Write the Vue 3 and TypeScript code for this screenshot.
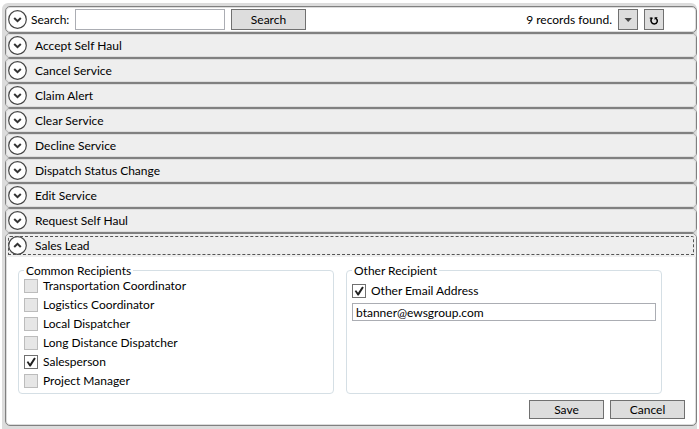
<script setup lang="ts">
import { ref } from 'vue'

interface Recipient {
  id: string
  label: string
  checked: boolean
}

const query = ref('')
const filtersOpen = ref(false)
const openSection = ref('Sales Lead')
const otherEnabled = ref(true)
const otherEmail = ref('btanner@ewsgroup.com')

const sections: string[] = [
  'Accept Self Haul',
  'Cancel Service',
  'Claim Alert',
  'Clear Service',
  'Decline Service',
  'Dispatch Status Change',
  'Edit Service',
  'Request Self Haul',
  'Sales Lead',
]

const recipients = ref<Recipient[]>([
  { id: 'transportation', label: 'Transportation Coordinator', checked: false },
  { id: 'logistics', label: 'Logistics Coordinator', checked: false },
  { id: 'local', label: 'Local Dispatcher', checked: false },
  { id: 'long', label: 'Long Distance Dispatcher', checked: false },
  { id: 'sales', label: 'Salesperson', checked: true },
  { id: 'project', label: 'Project Manager', checked: false },
])

function toggle(name: string): void {
  openSection.value = openSection.value === name ? '' : name
}
</script>

<template>
  <main class="panel">
    <form class="card search-bar" @submit.prevent>
      <button
        type="button"
        class="expander"
        aria-label="Search options"
        :aria-expanded="filtersOpen"
        @click="filtersOpen = !filtersOpen"
      >
        <svg class="ring" viewBox="0 0 19 19" aria-hidden="true">
          <circle cx="9.5" cy="9.5" r="8.8" />
          <path d="M6.2 8 L9.5 11.2 L12.8 8" />
        </svg>
      </button>
      <label class="search-label" for="search">Search:</label>
      <input id="search" v-model="query" class="text-box search-box" type="text" />
      <button type="submit" class="btn btn-tall">Search</button>
      <span class="count">{{ sections.length }} records found.</span>
      <button type="button" class="btn btn-icon" aria-label="More actions">
        <svg class="glyph" viewBox="0 0 10 10" aria-hidden="true">
          <path class="solid" d="M1.5 3 H8.9 L5.2 7 Z" />
        </svg>
      </button>
      <button type="button" class="btn btn-icon" aria-label="Refresh">
        <svg class="glyph" viewBox="0 0 10 10" aria-hidden="true">
          <path class="arc" d="M2.9 3 C1 5.4 2.2 8.9 5.2 8.9 C8.6 8.9 9.2 5.4 7 3.3" />
          <path class="head" d="M0.8 2.4 H3.6 V3.7 H0.8 Z M5.6 2.2 H8.8 L5.6 5 Z" />
        </svg>
      </button>
    </form>

    <section v-for="name in sections" :key="name" class="card">
      <button
        type="button"
        class="section-head"
        :class="{ focused: openSection === name }"
        :aria-expanded="openSection === name"
        @click="toggle(name)"
      >
        <svg class="ring" viewBox="0 0 19 19" aria-hidden="true">
          <circle cx="9.5" cy="9.5" r="8.8" />
          <path v-if="openSection === name" d="M6.2 11 L9.5 7.8 L12.8 11" />
          <path v-else d="M6.2 8 L9.5 11.2 L12.8 8" />
        </svg>
        <span>{{ name }}</span>
      </button>

      <form v-if="openSection === name" class="body" @submit.prevent>
        <div class="groups">
          <div class="group" role="group" aria-labelledby="common-title">
            <span id="common-title" class="group-title">Common Recipients</span>
            <label v-for="r in recipients" :key="r.id" class="check">
              <input v-model="r.checked" type="checkbox" :class="{ muted: !r.checked }" />
              <span>{{ r.label }}</span>
            </label>
          </div>
          <div class="group group-other" role="group" aria-labelledby="other-title">
            <span id="other-title" class="group-title">Other Recipient</span>
            <label class="check">
              <input v-model="otherEnabled" type="checkbox" />
              <span>Other Email Address</span>
            </label>
            <input v-model="otherEmail" class="text-box email" type="text" aria-label="Other email address" />
          </div>
        </div>
        <div class="actions">
          <button type="submit" class="btn">Save</button>
          <button type="button" class="btn" @click="openSection = ''">Cancel</button>
        </div>
      </form>
    </section>
  </main>
</template>

<style>
body {
  margin: 0;
  background: #fff;
}
</style>

<style scoped>
.panel {
  box-sizing: border-box;
  margin: 3px 2px 0;
  padding: 3px 0 3px 3px;
  min-height: calc(100vh - 3px);
  background: #dcdcdc;
  border-radius: 6px 6px 0 0;
  font-family: 'Segoe UI', Lato, 'Open Sans', sans-serif;
  font-size: 12px;
  font-variant-ligatures: none;
  line-height: 16px;
  color: #000;
}

button,
input {
  box-sizing: border-box;
  margin: 0;
  font: inherit;
  color: inherit;
}

.card {
  border: 1px solid #808080;
  border-radius: 5px;
  background: #fff;
  box-shadow: inset 0 0 0 1px #dcdcdc;
}

.search-bar {
  display: flex;
  align-items: center;
  height: 25px;
  padding: 0 32px 0 2px;
}

.expander {
  display: flex;
  padding: 0;
  border: 0;
  background: none;
}

.ring {
  flex: none;
  width: 19px;
  height: 19px;
  fill: none;
}

.ring circle {
  fill: #fff;
  stroke: #444;
  stroke-width: 1.2;
}

.ring path {
  stroke: #333;
  stroke-width: 2;
}

.search-label {
  width: 44px;
  margin-left: 4px;
  white-space: nowrap;
}

.text-box {
  border: 1px solid #abadb3;
  border-radius: 0;
  background: #fff;
  padding: 0 3px;
}

.search-box {
  width: 150px;
  height: 21px;
  margin-right: 6px;
}

.btn {
  width: 75px;
  height: 19px;
  padding: 0;
  border: 1px solid #707070;
  border-radius: 0;
  background: #ddd;
  line-height: 16px;
}

.btn-tall {
  height: 21px;
}

.count {
  margin-left: auto;
  white-space: nowrap;
}

.btn-icon {
  display: flex;
  align-items: center;
  justify-content: center;
  width: 20px;
  height: 21px;
  margin-left: 6px;
}

.glyph {
  width: 10px;
  height: 10px;
  fill: none;
}

.solid {
  fill: #444;
}

.arc {
  stroke: #000;
  stroke-width: 1.5;
}

.head {
  fill: #000;
}

.section-head {
  display: flex;
  align-items: center;
  gap: 8px;
  width: 100%;
  height: 23px;
  padding: 0 2px;
  border: 0;
  border-radius: 4px;
  background: #eee;
  box-shadow: inset 0 0 0 1px #dcdcdc;
  text-align: left;
}

.section-head.focused {
  outline: 1px dashed #555;
  outline-offset: -3px;
  border-radius: 4px 4px 0 0;
  box-shadow: none;
}

.body {
  padding: 6px 11px 6px 12px;
}

.groups {
  display: grid;
  grid-template-columns: 1fr 1fr;
  gap: 12px;
  padding-right: 23px;
}

.group {
  display: flex;
  flex-direction: column;
  gap: 3px;
  margin-top: 7px;
  padding: 0 5px 4px;
  border: 1px solid #d5dfe5;
  border-radius: 4px;
}

.group-title {
  align-self: flex-start;
  margin: -8px 0 -4px;
  padding: 0 2px;
  background: #fff;
}

.check {
  display: flex;
  align-items: center;
  gap: 5px;
}

.check input {
  flex: none;
  appearance: none;
  width: 14px;
  height: 14px;
  border: 1px solid #707070;
  background: #fff;
}

.check input:checked::before {
  content: '';
  display: block;
  width: 12px;
  height: 12px;
  background: #212121;
  clip-path: polygon(14% 50%, 27% 43%, 42% 64%, 76% 12%, 90% 20%, 48% 88%, 38% 88%);
}

.check input.muted {
  border-color: #bcbcbc;
  background: #e6e6e6;
}

.group-other {
  gap: 4px;
}

.group-other .check {
  margin-top: 4px;
}

.email {
  height: 18px;
}

.actions {
  display: flex;
  justify-content: flex-end;
  gap: 6px;
  margin-top: 6px;
}
</style>
